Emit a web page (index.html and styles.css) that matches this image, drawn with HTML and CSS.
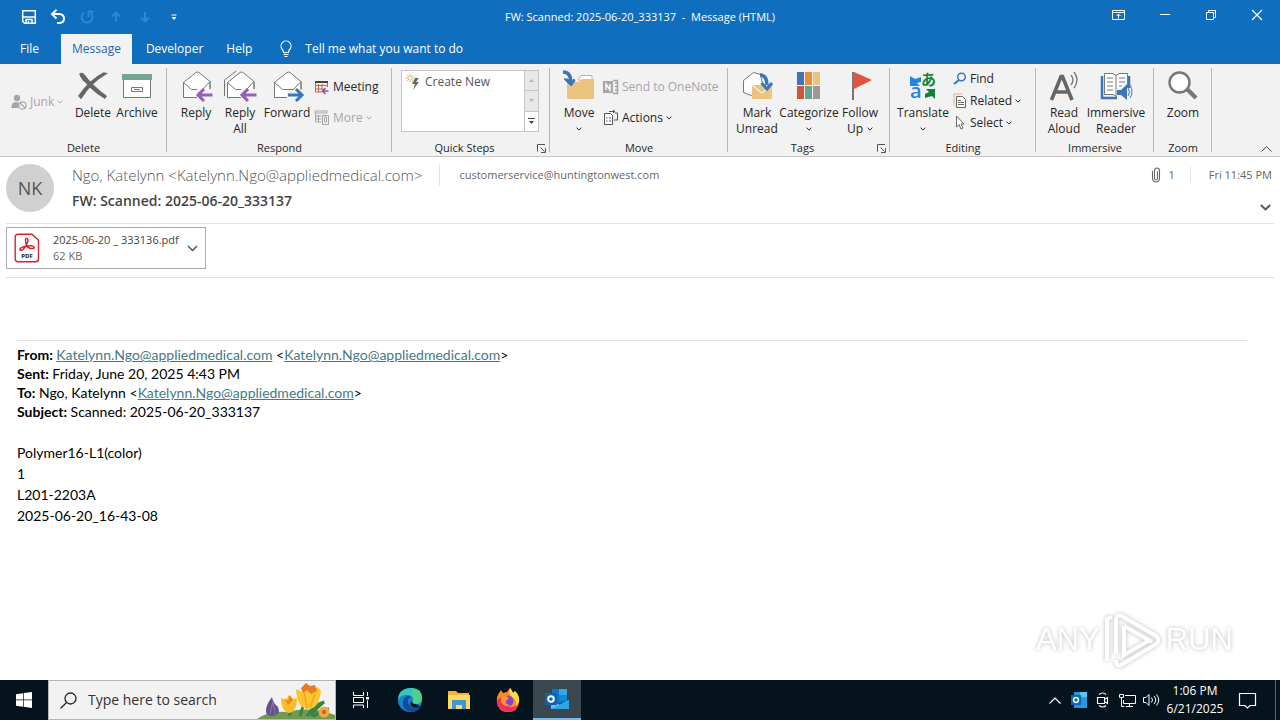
FILE: index.html
```html
<!DOCTYPE html>
<html lang="en">
<head>
<meta charset="utf-8">
<title>FW: Scanned: 2025-06-20_333137 - Message (HTML)</title>
<link rel="stylesheet" href="styles.css">
</head>
<body>
<svg class="defs" aria-hidden="true">
  <symbol id="chev" viewBox="0 0 6 4"><path d="M.5.6 3 3.1 5.500.6" fill="none" stroke="currentColor"/></symbol>
  <symbol id="launch" viewBox="0 0 9 9"><path d="M.5 7.500V.5H8M3.500 3.500l4 4M8.500 4v4.500H4" fill="none" stroke="#555"/></symbol>
  <symbol id="env" viewBox="0 0 32 32"><path d="M3.500 12.500 16 2.500q1.500-1 3 0l11 9v16h-26.500z" fill="#fff" stroke="#777"/><path d="m3.500 12.500 8 7h11l7.500-8" fill="none" stroke="#777"/></symbol>
</svg>
<header class="top">
  <div class="titlebar">
    <div class="quick">
      <button aria-label="Save"><svg width="16" height="16" viewBox="0 0 16 16"><path d="M1.700 1.700h12.600v12.600H3.500l-1.800-1.800zM2 8h12M5 14v-3.500h6V14M7.500 12v2" fill="none" stroke="#fff" stroke-width="1.500"/></svg></button>
      <button aria-label="Undo"><svg width="16" height="16" viewBox="0 0 16 16"><path d="M6.500.8 2 5l4.500 4.500M2.500 5H9q5 .2 5 4.500T9.500 14H7" fill="none" stroke="#fff" stroke-width="2"/></svg></button>
      <button class="off" aria-label="Redo"><svg width="16" height="16" viewBox="0 0 16 16"><path d="M5 3.500a5.500 5.500 0 1 0 6.500.2M9.500 8V2.500h5" fill="none" stroke="#3089d4" stroke-width="1.800"/></svg></button>
      <button class="off" aria-label="Previous item"><svg width="16" height="16" viewBox="0 0 16 16"><path d="M8 13V4M4 7.500 8 3.500l4 4" fill="none" stroke="#3089d4" stroke-width="1.800"/></svg></button>
      <button class="off" aria-label="Next item"><svg width="16" height="16" viewBox="0 0 16 16"><path d="M8 3v9M4 8.500l4 4 4-4" fill="none" stroke="#3089d4" stroke-width="1.800"/></svg></button>
      <button aria-label="Customize toolbar"><svg width="16" height="16" viewBox="0 0 16 16"><path d="M5.500 6h5" stroke="#fff"/><path d="M5.500 8h5L8 11z" fill="#fff"/></svg></button>
    </div>
    <h1 class="wintitle">FW: Scanned: 2025-06-20_333137&nbsp; -&nbsp; Message (HTML)</h1>
    <div class="winctl">
      <button aria-label="Ribbon display options"><svg width="14" height="12" viewBox="0 0 14 12"><path d="M.5 1.500h12v9H.5zM.5 3.500h12M6.500 9.500v-4M4.500 7l2-2 2 2" fill="none" stroke="#fff"/></svg></button>
      <button aria-label="Minimize"><svg width="12" height="12" viewBox="0 0 12 12"><path d="M1 5.500h10" stroke="#fff"/></svg></button>
      <button aria-label="Restore"><svg width="12" height="12" viewBox="0 0 12 12"><path d="M1.500 3.500h7v7h-7zM3.500 3.500v-2h7v7h-2" fill="none" stroke="#fff"/></svg></button>
      <button aria-label="Close"><svg width="12" height="12" viewBox="0 0 12 12"><path d="m1 1 10 10M11 1 1 11" stroke="#fff" stroke-width="1.200"/></svg></button>
    </div>
  </div>
  <nav class="tabs">
    <button class="tab file">File</button>
    <button class="tab active">Message</button>
    <button class="tab">Developer</button>
    <button class="tab">Help</button>
    <button class="tab tell"><svg width="14" height="18" viewBox="0 0 14 18"><path d="M4.500 12.500q0-2-1.500-3.500A5 5 0 1 1 11 9q-1.500 1.500-1.500 3.500zM4.500 14.500h5M5.500 16.500h3" fill="none" stroke="#fff" stroke-width="1.100"/></svg>Tell me what you want to do</button>
  </nav>
</header>

<section class="ribbon" aria-label="Ribbon">
  <div class="group g-delete">
    <div class="tools">
      <button class="small off junk"><svg width="16" height="16" viewBox="0 0 16 16"><circle cx="6" cy="4" r="3.200" fill="#a6a6a6"/><path d="M.5 14Q0 8 5 8l4 1-2 5z" fill="#a6a6a6"/><circle cx="11.500" cy="11.500" r="3.700" fill="#f2f2f2" stroke="#a6a6a6" stroke-width="1.200"/><path d="m9 9 5 5" stroke="#a6a6a6" stroke-width="1.200"/></svg>Junk<svg class="dd"><use href="#chev"/></svg></button>
      <button class="big w44"><svg class="ic" viewBox="0 0 32 32"><path d="M2 4q3-3 6 1 7 10 22 21l-2 3Q11 19 2 4z" fill="#666"/><path d="M29 3.500Q14 12 4 28l-2-2Q13 10 27 3z" fill="#666" stroke="#666" stroke-width="1.500"/><path d="m4 5 4 6" stroke="#666" stroke-width="3"/></svg>Delete</button>
      <button class="big w44"><svg class="ic" viewBox="0 0 32 32"><path d="M2.500 8h27v19.500h-27z" fill="#fff" stroke="#777"/><path d="M1 4h30v6H1z" fill="#74a695"/><path d="M10.500 17.500h11v4h-11zM13 19.500h6" fill="none" stroke="#777"/></svg>Archive</button>
    </div>
    <h2>Delete</h2>
  </div>
  <div class="group g-respond">
    <div class="tools">
      <button class="big w44"><svg class="ic" viewBox="0 0 32 32"><use href="#env"/><path d="M17 19h15v16H17z" fill="#f2f2f2"/><path d="M30 12v7M3.500 27.500H17" stroke="#777"/><path d="M32.500 25H18M24 19l-6 6 6 6" fill="none" stroke="#935fb9" stroke-width="3"/></svg>Reply</button>
      <button class="big w44"><svg class="ic" viewBox="0 0 32 32"><path d="M.5 26V10L12.500.8" fill="none" stroke="#777"/><use href="#env"/><path d="M17 19h15v16H17z" fill="#f2f2f2"/><path d="M30 12v7" stroke="#777"/><path d="M32.500 25H18M24 19l-6 6 6 6" fill="none" stroke="#935fb9" stroke-width="3"/></svg>Reply<br>All</button>
      <button class="big w50"><svg class="ic" viewBox="0 0 32 32"><use href="#env"/><path d="M16 20h16v15H16z" fill="#f2f2f2"/><path d="M30 12v7" stroke="#777"/><path d="M17 25h13.500M25 19l6 6-6 6" fill="none" stroke="#3a77b8" stroke-width="3"/></svg>Forward</button>
      <div class="pair">
        <button class="small"><svg width="16" height="16" viewBox="0 0 16 16"><path d="M1.500 2.500h12V8M1.500 2v11H8M4.500 5v8M8 5v6M1.500 6.500h12M1.500 10H9" fill="none" stroke="#c46a38"/><path d="M1 2h13v2H1z" fill="#444"/><path d="M14.500 12H9M11.500 9l-3 3 3 3" fill="none" stroke="#8650a8" stroke-width="1.600"/></svg>Meeting</button>
        <button class="small off"><svg width="16" height="16" viewBox="0 0 16 16"><path d="M1 1h12v2H1zM1.500 3v9H7M4.500 5v7M1.500 6h6M1.500 9h6M8.500 5.500h6v9h-6zM10.500 7v5h2V7z" fill="none" stroke="#a6a6a6"/></svg>More<svg class="dd"><use href="#chev"/></svg></button>
      </div>
    </div>
    <h2>Respond</h2>
  </div>
  <div class="group g-quick">
    <div class="gallery">
      <button class="qstep"><svg width="14" height="16" viewBox="0 0 14 16"><path d="m9 4-3 6h3l-2 6 6-8h-3l3-4z" fill="#666"/><path d="M4 0v8M0 4h8M1.200 1.200l5.600 5.600M6.800 1.200 1.200 6.800" stroke="#e2a55c"/><circle cx="4" cy="4" r="1.500" fill="#fff"/></svg>Create New</button>
      <div class="scroll">
        <button class="off" aria-label="Scroll up"><svg width="5" height="3" viewBox="0 0 5 3"><path d="M0 3h5L2.500 0z" fill="#b5b5b5"/></svg></button>
        <button class="off" aria-label="Scroll down"><svg width="5" height="3" viewBox="0 0 5 3"><path d="M0 0h5L2.500 3z" fill="#b5b5b5"/></svg></button>
        <button aria-label="More quick steps"><svg width="7" height="7" viewBox="0 0 7 7"><path d="M0 0h7v1H0zM1 3h5L3.500 6z" fill="#444"/></svg></button>
      </div>
    </div>
    <div class="foot"><h2>Quick Steps</h2><button class="launch" aria-label="Quick Steps options"><svg width="9" height="9"><use href="#launch"/></svg></button></div>
  </div>
  <div class="group g-move">
    <div class="tools">
      <button class="big w44"><svg class="ic" viewBox="0 0 32 32"><path d="m15 10 3-4.500h11V11z" fill="#fff" stroke="#e9a66c"/><path d="M4 12h12l4-3h11v20H4z" fill="#eac481"/><path d="M0 2q8 0 8 11" fill="none" stroke="#3c76b8" stroke-width="3.500"/><path d="M1 9h4l3 4 3-4 1 2-4 5z" fill="#3c76b8" stroke="#3c76b8"/></svg>Move<svg class="dd"><use href="#chev"/></svg></button>
      <div class="pair">
        <button class="small off"><svg width="16" height="16" viewBox="0 0 16 16"><path d="M0 2h10v12H0z" fill="#a6a6a6"/><path d="M3 11V5l4 6V5" fill="none" stroke="#fff" stroke-width="1.400"/><path d="M10 1.500h4.500v13H10M12 4h2.500M12 7.500h2.500M12 11h2.500" fill="none" stroke="#a6a6a6" stroke-width="1.500"/></svg>Send to OneNote</button>
        <button class="small"><svg width="16" height="16" viewBox="0 0 16 16"><path d="M1.500 3.500h6l2 2v9h-8z" fill="#fff" stroke="#555"/><path d="M3 8h1.500M6 8h2M3 11h1.500M6 11h2M6 1.500h6M12 3h2.500v7H11M10 0l2 1.500L10 3" fill="none" stroke="#555"/></svg>Actions<svg class="dd"><use href="#chev"/></svg></button>
      </div>
    </div>
    <h2>Move</h2>
  </div>
  <div class="group g-tags">
    <div class="tools">
      <button class="big w50"><svg class="ic" viewBox="0 0 32 32"><path d="m2.500 10.500 10-8 7 2 2 9L14 27l-11.500-4.500z" fill="#fff" stroke="#777"/><path d="M11 15h20v14H11z" fill="#eac481"/><path d="m11 15 10 8 10-8" fill="none" stroke="#fff"/><path d="M19 5q7 0 7 10" fill="none" stroke="#3c76b8" stroke-width="3.500"/><path d="m20.500 13 5.500 6 5-6" fill="none" stroke="#3c76b8" stroke-width="3"/></svg>Mark<br>Unread</button>
      <button class="big w54"><svg class="ic" viewBox="0 0 32 32"><path d="M4 2h7v13H4z" fill="#3c76b8"/><path d="M12 2h7v13h-7z" fill="#ed8d35"/><path d="M20 2h7v13h-7z" fill="#eac481"/><path d="M4 16h7v13H4z" fill="#d35339"/><path d="M12 16h7v13h-7z" fill="#68a48d"/><path d="M20 16h7v13h-7z" fill="#999"/></svg>Categorize<svg class="dd"><use href="#chev"/></svg></button>
      <button class="big w48"><svg class="ic" viewBox="0 0 32 32"><path d="M8 2h2v28H8z" fill="#777"/><path d="m10 2 18 8-18 9z" fill="#df5340"/></svg>Follow<span class="up">Up<svg class="dd"><use href="#chev"/></svg></span></button>
    </div>
    <div class="foot"><h2>Tags</h2><button class="launch" aria-label="Tags options"><svg width="9" height="9"><use href="#launch"/></svg></button></div>
  </div>
  <div class="group g-edit">
    <div class="tools">
      <button class="big w50"><span class="ic trans"><svg width="32" height="32" viewBox="0 0 32 32"><path d="M3 6v10h10l-3-3 4-1V7l-6 2z" fill="#1f87dc"/><path d="M28 19v10l-3-3-7 2v-4l4-2-3-3z" fill="#128238"/></svg><span class="a">a</span><span class="hira">あ</span></span>Translate<svg class="dd"><use href="#chev"/></svg></button>
      <div class="triple">
        <button class="small"><svg width="14" height="16" viewBox="0 0 14 16"><circle cx="8.500" cy="6" r="3.800" fill="none" stroke="#3c76b8" stroke-width="1.500"/><path d="m6 9-5 4" stroke="#3c76b8" stroke-width="2.200"/></svg>Find</button>
        <button class="small"><svg width="14" height="16" viewBox="0 0 14 16"><path d="M1 13V1h8" fill="none" stroke="#e9b178"/><path d="M3.500 3.500h6l3 3v8h-9z" fill="#fff" stroke="#666"/><path d="M5 7.500h3M5 9.500h6M5 11.500h6" stroke="#666"/></svg>Related<svg class="dd"><use href="#chev"/></svg></button>
        <button class="small"><svg width="14" height="16" viewBox="0 0 14 16"><path d="M3.500 1v11l2.500-2.500 2 4.500 2-1-2-4h3z" fill="#fff" stroke="#666"/></svg>Select<svg class="dd"><use href="#chev"/></svg></button>
      </div>
    </div>
    <h2>Editing</h2>
  </div>
  <div class="group g-imm">
    <div class="tools">
      <button class="big w50"><svg class="ic" viewBox="0 0 32 32"><path d="M3.500 30 13 6.500h1.500L24 30M7 22h13" fill="none" stroke="#666" stroke-width="3.600"/><path d="M23 5q4 5 0 10M26 2q6 8 0 16" fill="none" stroke="#777" stroke-width="1.300"/></svg>Read<br>Aloud</button>
      <button class="big w54"><svg class="ic" viewBox="0 0 32 32"><path d="M2 6v22h27V6" fill="none" stroke="#3c76b8" stroke-width="2.500"/><path d="M4.500 3.500H13l3 2 3-2h8.500v21H19l-3 2-3-2H4.500z" fill="#fff" stroke="#777"/><path d="M16 5v21M7 8h6M7 12h6M7 16h6M7 20h6M19 8h6M19 12h6M19 16h3" stroke="#777"/><path d="M17 18h15v12H17z" fill="#f2f2f2"/><path d="M17 20h4l6-6v16l-6-5h-4z" fill="#3c76b8"/><path d="M28 18q3 4 0 8M30 15q4 7 0 13" fill="none" stroke="#3c76b8"/></svg>Immersive<br>Reader</button>
    </div>
    <h2>Immersive</h2>
  </div>
  <div class="group g-zoom">
    <div class="tools">
      <button class="big w50"><svg class="ic" viewBox="0 0 32 32"><circle cx="12.500" cy="12.500" r="10" fill="#fff" stroke="#777" stroke-width="2.400"/><path d="m20 19 9 9" stroke="#777" stroke-width="4.200"/></svg>Zoom</button>
    </div>
    <h2>Zoom</h2>
  </div>
  <button class="collapse" aria-label="Collapse the ribbon"><svg width="11" height="6" viewBox="0 0 11 6"><path d="m.5 5.500 5-5 5 5" fill="none" stroke="#444"/></svg></button>
</section>

<main class="mail">
  <section class="head">
    <div class="avatar">NK</div>
    <div class="who">
      <div class="line">
        <span class="from">Ngo, Katelynn &lt;Katelynn.Ngo@appliedmedical.com&gt;</span>
        <span class="to">customerservice@huntingtonwest.com</span>
      </div>
      <h2 class="subject">FW: Scanned: 2025-06-20_333137</h2>
    </div>
    <div class="meta">
      <div class="line">
        <span class="clip"><svg width="10" height="16" viewBox="0 0 10 16"><path d="M6.500 4.500v7q-.2 1.500-1.500 1.500t-1.500-1.500V3.500q.2-2.500 2.500-2.500t2.500 2.500v8q-.3 3.500-3.500 3.500T1.500 11.500V4" fill="none" stroke="#666" stroke-width="1.100"/></svg>1</span>
        <time class="when">Fri 11:45 PM</time>
      </div>
      <button class="expand" aria-label="Expand header"><svg width="11" height="7" viewBox="0 0 11 7"><path d="m.8 1 4.700 4.500L10.200 1" fill="none" stroke="#555" stroke-width="1.900"/></svg></button>
    </div>
  </section>
  <section class="files">
    <button class="file-card">
      <svg width="26" height="30" viewBox="0 0 26 30"><path d="M4 1.200h14l6.500 6V26q0 2.800-2.800 2.800H4Q1.200 28.800 1.200 26V4Q1.200 1.200 4 1.200z" fill="#fff" stroke="#d3232e" stroke-width="1.400"/><path d="M12 5.500q3-.5 1.500 4Q12 14 8.500 17q-3 1-2.500-1 1-2 7-3t7 1-3 1.500-5-5T12 5.500z" fill="none" stroke="#d3232e" stroke-width="1.500"/><text x="13" y="25" text-anchor="middle" class="pdf">PDF</text></svg>
      <span class="fname">2025-06-20 _ 333136.pdf<br><span class="fsize">62 KB</span></span>
      <svg width="11" height="7" viewBox="0 0 11 7"><path d="m1 1 4.500 4.500L10 1" fill="none" stroke="#555" stroke-width="1.500"/></svg>
    </button>
  </section>
  <article class="body">
    <p class="hdr"><b>From:</b> <a href="#">Katelynn.Ngo@appliedmedical.com</a> &lt;<a href="#">Katelynn.Ngo@appliedmedical.com</a>&gt;<br>
      <b>Sent:</b> Friday, June 20, 2025 4:43 PM<br>
      <b>To:</b> Ngo, Katelynn &lt;<a href="#">Katelynn.Ngo@appliedmedical.com</a>&gt;<br>
      <b>Subject:</b> Scanned: 2025-06-20_333137</p>
    <p class="txt">Polymer16-L1(color)<br>1<br>L201-2203A<br>2025-06-20_16-43-08</p>
  </article>
  <div class="mark"><span>ANY</span><svg width="58" height="64" viewBox="0 0 58 64"><path d="M3 53V11l5-2M12 12v34M12 12q0-6 6-4l34 20q5 4 0 8L17 57q-5 2-5-5M20 18l28 16M20 18v29l24-14" fill="none" stroke="#fff" stroke-width="4"/></svg><span>RUN</span></div>
</main>

<footer class="taskbar">
  <button class="start" aria-label="Start"><svg width="16" height="16" viewBox="0 0 16 16"><path d="m0 2.200 7-1V7.600H0zM7.700 1.100 16 0v7.600H7.700zM0 8.300h7v6.400l-7-1zM7.700 8.300H16V16l-8.300-1.200z" fill="#fff"/></svg></button>
  <label class="search"><svg width="17" height="17" viewBox="0 0 17 17"><circle cx="10.500" cy="6.500" r="5.500" fill="none" stroke="#222" stroke-width="1.300"/><path d="m6.500 10.500-6 6" stroke="#222" stroke-width="1.300"/></svg>
    <input type="text" placeholder="Type here to search" aria-label="Type here to search">
    <svg width="78" height="38" viewBox="0 0 78 38"><path d="M0 38q12-9 31-7 22-6 47 3v4z" fill="#6e9b50"/><path d="M43 35Q47 20 54 10M33 35l-1-8M50 35q8-12 17-14-8 6-13 14M56 36q9-8 16-8" fill="none" stroke="#398343" stroke-width="3"/><path d="M15 16q1 6 6 10 3 8-5 9-8 0-7-6 0-5 6-13z" fill="#65528d"/><path d="m13 33 3-13 2 14" fill="none" stroke="#8976ab"/><path d="M24 17l5 2 3-5 4 4 4-1q0 15-9 15-7-3-7-15z" fill="#f8bd29"/><path d="m27 17 4 3 2-6 3 5-5 5z" fill="#ea8720"/><path d="M39 8l6 3 4-7 7 4 5-2 3 4q-2 18-13 18-11-1-12-20z" fill="#fac52d"/><path d="m44 7 5-5 4 3 5-1 2 6-6 3-4-4-4 3z" fill="#ea7b20"/><path d="m50 27-3-16M53 27l5-14" stroke="#e9982a"/><circle cx="67" cy="31" r="5.500" fill="#f1a942"/><circle cx="67" cy="31" r="2" fill="#c75f28"/></svg>
  </label>
  <button class="app" aria-label="Task view"><svg width="18" height="18" viewBox="0 0 18 18"><path d="M1.500 1v3.500h10V1M1.500 17v-3h10v3M1.500 6.500h10v5h-10zM15.500 1v4M15.500 9.500V17" fill="none" stroke="#fff"/><path d="M14 6h3v2.500h-3z" fill="#fff"/></svg></button>
  <button class="app" aria-label="Edge"><svg width="26" height="26" viewBox="0 0 26 26"><circle cx="13" cy="13" r="12" fill="#1683cf"/><path d="M1 13Q1 2 13 1t12 10q0 7-8 6-3-1-1-3 1-6-6-6T1 13z" fill="#36c5b9"/><path d="M14 1q11 1 11 10-1 6-8 6-3-1-1-3 1-3-2-5 4-3 0-8z" fill="#60d66b" opacity=".6"/><path d="M10 9q-5 3-4 9t9 7q6 0 9-6-5 3-9 1t-4-6q0-3 3-4-1-2-4-1z" fill="#124c99"/><path d="M15 14q0 3 5 3.500l3 2q-5 3-9-1-2-2 1-4.500z" fill="#04131c"/></svg></button>
  <button class="app" aria-label="File Explorer"><svg width="24" height="22" viewBox="0 0 24 22"><path d="M1 2h8l2 2h11v15H1z" fill="#f3b52e"/><path d="M1 6h22v14H1z" fill="#ffd968"/><path d="M5 20v-8q0-1 1-1h12q1 0 1 1v8h-4v-4H9v4z" fill="#3c97d3"/></svg></button>
  <button class="app" aria-label="Firefox"><svg width="26" height="26" viewBox="0 0 26 26"><path d="M4 6l2-3 2 3 4-1 3-4q2 2 3 5l2-2q5 5 4 11-1 10-11 10T2 15q-1-5 2-9z" fill="#ff8a25"/><path d="M2 13q0 11 11 12 8 0 11-8-6 5-12 2Q6 17 6 10z" fill="#f52f59"/><path d="M15 1q2 2 3 5l2-2q5 5 4 11l-3 4q1-6-4-9-4-3-2-9z" fill="#ffdb3d"/><circle cx="13" cy="14" r="5.500" fill="#8245d3"/><path d="m6 10 5-1 3 2-3 3q-1 4 5 4-7 3-10-3z" fill="#ff961f"/></svg></button>
  <button class="app open" aria-label="Outlook"><svg width="26" height="22" viewBox="0 0 26 22"><path d="M8 1h15v14H8z" fill="#1672c4"/><path d="M15 1h8v6h-8z" fill="#31a9e8"/><path d="M15 7h8v6h-8z" fill="#1287d8"/><path d="M7 12l9 5 9-5v9H7z" fill="#54c7ee"/><path d="m7 21 18-9v9z" fill="#2da6e2"/><path d="M1 5h12v12H1z" fill="#0e63b8"/><circle cx="7" cy="11" r="2.800" fill="none" stroke="#fff" stroke-width="1.900"/></svg></button>
  <div class="tray">
    <button aria-label="Show hidden icons"><svg width="12" height="7" viewBox="0 0 12 7"><path d="m.5 6.500 5.500-5.500 5.500 5.500" fill="none" stroke="#fff" stroke-width="1.200"/></svg></button>
    <button aria-label="Outlook status"><svg width="16" height="16" viewBox="0 0 16 16"><path d="M3 0h13v16H3z" fill="#2599df"/><path d="M9 0h7v5H9z" fill="#58c8f0"/><path d="M0 3h10v10H0z" fill="#0c64b8"/><circle cx="5" cy="8" r="2.400" fill="none" stroke="#fff" stroke-width="1.500"/></svg></button>
    <button aria-label="Meet now"><svg width="14" height="16" viewBox="0 0 14 16"><path d="M1.500 5.500h7v6h-7zM8.500 7.500l3-2v6l-3-2M3 2.500q4-3 7 0M3 13.500q4 3 7 0" fill="none" stroke="#fff" stroke-width="1.100"/></svg></button>
    <button aria-label="Network"><svg width="17" height="15" viewBox="0 0 17 15"><path d="M6 2.500h10.500v8h-12V7M10.500 10.500v3M7 13.500h7M.5 1.500h4v3h-4zM2.500 4.500v9h3" fill="none" stroke="#fff"/></svg></button>
    <button aria-label="Volume"><svg width="17" height="14" viewBox="0 0 17 14"><path d="M.5 4.500H3l3-3v11l-3-3H.5zM8.500 4.500q2 2.500 0 5M11 3q3.500 4 0 8M13.500 1.500q4.500 5.500 0 11" fill="none" stroke="#fff"/></svg></button>
    <button class="clock">1:06 PM<br>6/21/2025</button>
    <button class="note" aria-label="Notifications"><svg width="17" height="17" viewBox="0 0 17 17"><path d="M.5 1.500h16v12H11l-2.500 2.500L6 13.500H.5z" fill="none" stroke="#fff" stroke-width="1.200"/></svg></button>
    <button class="desk" aria-label="Show desktop"></button>
  </div>
</footer>
</body>
</html>
```
FILE: styles.css
```css
* { box-sizing: border-box; }
body {
  margin: 0;
  min-height: 100vh;
  display: flex;
  flex-direction: column;
  background: #fff;
  color: #262626;
  font: 12px/16px "Open Sans", "Noto Sans", sans-serif;
}
button {
  border: 0;
  padding: 0;
  background: none;
  color: inherit;
  font: inherit;
  white-space: nowrap;
}
h1, h2, p { margin: 0; font-size: inherit; font-weight: 400; }
svg { display: block; flex: none; overflow: visible; }
.defs { position: absolute; width: 0; height: 0; }

.top { background: #106ebe; color: #fff; }
.titlebar {
  display: grid;
  grid-template-columns: 1fr auto 1fr;
  align-items: center;
  height: 34px;
}
.quick { display: flex; gap: 13px; padding-left: 21px; }
.wintitle { white-space: nowrap; font-size: 11px; }
.winctl { display: flex; justify-content: flex-end; align-self: start; }
.winctl button { display: grid; place-items: center; width: 46px; height: 30px; }
.tabs { display: flex; height: 30px; }
.tab { padding: 0 9px 0 14px; }
.tab.file { padding: 0 22px 0 20px; }
.tab.active { padding: 0 11px; background: #f2f2f2; color: #1a66b0; }
.tab.tell { display: flex; align-items: center; gap: 12px; padding-left: 18px; }

.ribbon {
  display: flex;
  border-bottom: 1px solid #c8c6c4;
  background: #f2f2f2;
  padding-top: 4px;
}
.group {
  position: relative;
  display: flex;
  flex-direction: column;
  flex: none;
  height: 88px;
  text-align: center;
}
.group::after {
  content: "";
  position: absolute;
  right: 0;
  top: 0;
  width: 1px;
  height: 84px;
  background: #b8b8b8;
}
.group > h2, .foot h2 { flex: 1; font-size: 11px; }
.foot { display: flex; align-items: center; }
.launch { width: 13px; }
.tools { display: flex; height: 72px; }
.g-delete { width: 167px; }
.g-delete .tools { padding-left: 11px; }
.g-respond { width: 225px; }
.g-respond .tools { padding-left: 7px; }
.g-quick { width: 158px; padding-top: 2px; }
.g-move { width: 178px; }
.g-move .tools { padding-left: 7px; }
.g-tags { width: 162px; }
.g-tags .tools { padding-left: 4px; }
.g-edit { width: 146px; }
.g-edit .tools { padding-left: 8px; }
.g-imm { width: 118px; }
.g-imm .tools { padding-left: 3px; }
.g-zoom { width: 58px; }
.g-zoom .tools { padding-left: 4px; }

.big {
  display: flex;
  flex-direction: column;
  align-items: center;
  padding-top: 2px;
}
.ic { width: 32px; height: 32px; margin-bottom: 3px; }
.w44 { width: 44px; }
.w48 { width: 48px; }
.w50 { width: 50px; }
.w54 { width: 54px; }
.big > .dd { margin: 6px; }
.dd { display: block; width: 6px; height: 4px; }
.up { display: flex; align-items: center; gap: 4px; }
.small { display: flex; align-items: center; gap: 3px; }
.junk { width: 60px; height: 68px; }
.off { color: #a6a6a6; }
.pair { display: flex; flex-direction: column; padding: 3px 0 0 2px; }
.pair .small { height: 31px; }
.triple { display: flex; flex-direction: column; padding-left: 5px; }
.triple .small { height: 22px; }
.trans { position: relative; line-height: 16px; }
.trans .a { position: absolute; left: 3px; top: 13px; color: #1f87dc; font-size: 20px; font-weight: 600; }
.trans .hira { position: absolute; left: 14px; top: 1px; color: #128238; font: 700 15px/16px "Noto Sans CJK JP", sans-serif; }
.collapse { margin-left: auto; align-self: flex-end; padding: 0 8px 4px; }

.gallery {
  display: flex;
  width: 138px;
  height: 62px;
  margin: 0 0 8px 9px;
  border: 1px solid #c6c6c6;
  background: #fff;
}
.qstep {
  display: flex;
  align-items: center;
  align-self: flex-start;
  flex: 1;
  gap: 5px;
  height: 22px;
  padding-left: 4px;
  color: #555;
}
.scroll { display: flex; flex-direction: column; width: 14px; border-left: 1px solid #c6c6c6; }
.scroll button { flex: 1; display: grid; place-items: center; }
.scroll .off { background: #e8e8e8; border-bottom: 1px solid #c6c6c6; }

.mail { position: relative; flex: 1; padding: 0 6px; }
.head { display: flex; height: 67px; border-bottom: 1px solid #e1e1e1; padding-top: 7px; }
.avatar {
  display: grid;
  place-items: center;
  width: 48px;
  height: 48px;
  border-radius: 50%;
  background: #d0d0d0;
  color: #555;
  font-size: 18px;
}
.who { flex: 1; padding-left: 18px; }
.line { display: flex; align-items: center; height: 22px; color: #666; font-size: 11px; }
.from { padding-right: 17px; font-size: 15px; font-weight: 300; color: #555; }
.to { padding: 3px 0 3px 19px; border-left: 1px solid #e1e1e1; }
.subject { padding-top: 5px; font-size: 14px; line-height: 20px; font-weight: 600; color: #444; }
.meta { display: flex; flex-direction: column; align-items: flex-end; padding-right: 2px; }
.clip { display: flex; align-items: center; gap: 7px; padding-right: 15px; border-right: 1px solid #e1e1e1; }
.when { padding-left: 18px; }
.expand { padding: 18px 1px 0; }
.files { padding: 3px 0 8px; border-bottom: 1px solid #e1e1e1; }
.file-card {
  display: flex;
  align-items: center;
  width: 200px;
  height: 42px;
  padding: 0 7px;
  border: 1px solid #ababab;
  text-align: left;
  font-size: 11px;
  color: #444;
}
.fname { flex: 1; padding-left: 13px; }
.fsize { color: #666; }
.pdf { font: 700 6px "Open Sans", sans-serif; fill: #111; }
.body { margin: 62px 27px 0 11px; color: #000; font: 14px/19px Lato, sans-serif; }
.hdr { border-top: 1px solid #e1e1e1; padding-top: 4px; }
.hdr a { color: #467886; }
.txt { padding-top: 21px; line-height: 21px; }
.mark {
  position: absolute;
  right: 47px;
  bottom: 8px;
  display: flex;
  align-items: center;
  gap: 4px;
  color: #fff;
  font: 31px/64px "Liberation Sans", sans-serif;
  filter: drop-shadow(0 0 2px #bbb);
}

.taskbar { display: flex; height: 40px; background: #04131c; color: #fff; }
.start { display: grid; place-items: center; width: 48px; }
.search {
  display: flex;
  align-items: center;
  width: 288px;
  padding-left: 11px;
  border: 1px solid #b5b5b5;
  background: #f2f2f2;
}
.search input {
  flex: 1;
  min-width: 0;
  border: 0;
  padding: 0 0 0 11px;
  background: none;
  color: #333;
  font: 14px/20px "Open Sans", sans-serif;
}
.search input::placeholder { color: #333; opacity: 1; }
.app { display: grid; place-items: center; width: 48px; margin-left: 1px; }
.app.open { background: #39474f; border-bottom: 2px solid #76b9ed; }
.tray { display: flex; align-items: stretch; margin-left: auto; }
.tray button { display: grid; place-items: center; width: 24px; }
.tray .clock { width: 64px; align-content: center; line-height: 18px; text-align: center; display: block; }
.tray .note { width: 40px; }
.tray .desk { width: 5px; margin-left: 8px; border-left: 1px solid #5a656b; }
```
